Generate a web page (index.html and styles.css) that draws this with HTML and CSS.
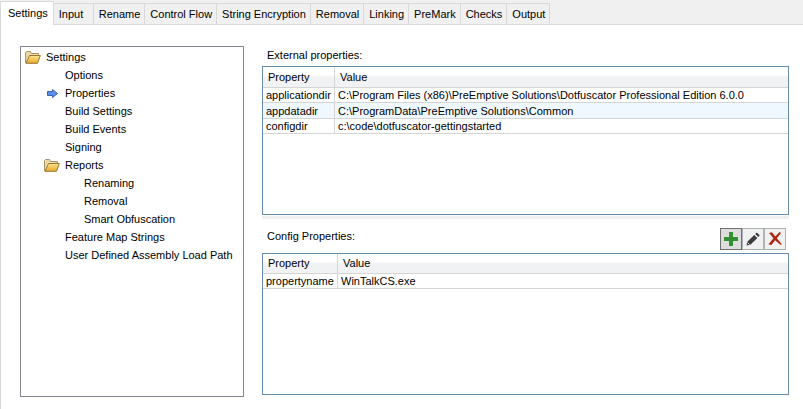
FILE: index.html
```html
<!DOCTYPE html>
<html lang="en">
<head>
    <meta charset="UTF-8">
    <meta name="viewport" content="width=device-width, initial-scale=1.0">
    <title>Settings</title>
    <link rel="stylesheet" href="styles.css">
</head>
<body>
    <!-- Shared icons -->
    <svg class="defs" aria-hidden="true">
        <defs>
            <linearGradient id="gold" x1="0" y1="0" x2="0" y2="1">
                <stop offset="0" stop-color="#fbe48c"/>
                <stop offset="1" stop-color="#e8a92c"/>
            </linearGradient>
            <symbol id="folder" viewBox="0 0 16 13">
                <path d="M0.5 12V1.5L1.5 0.5H5.5L6.5 2.5H13.5V5" fill="#ead9a8" stroke="#a89468"/>
                <path d="M1 12.3L4.5 4.5H15.3L12.5 12.3Z" fill="url(#gold)" stroke="#9a7734"/>
            </symbol>
        </defs>
    </svg>

    <div class="tabs" role="tablist">
        <button class="tab active" role="tab" aria-selected="true">Settings</button>
        <button class="tab" role="tab">Input</button>
        <button class="tab" role="tab">Rename</button>
        <button class="tab" role="tab">Control Flow</button>
        <button class="tab" role="tab">String Encryption</button>
        <button class="tab" role="tab">Removal</button>
        <button class="tab" role="tab">Linking</button>
        <button class="tab" role="tab">PreMark</button>
        <button class="tab" role="tab">Checks</button>
        <button class="tab" role="tab">Output</button>
    </div>

    <div class="page">
        <!-- Settings tree -->
        <nav class="tree">
            <a class="node" href="#"><svg class="folder"><use href="#folder"/></svg>Settings</a>
            <ul>
                <li><a class="node" href="#">Options</a></li>
                <li>
                    <a class="node current" href="#">
                        <svg class="arrow" viewBox="0 0 11 9"><path d="M0.5 2.5H5.5V0.5L10.5 4.5L5.5 8.5V6.5H0.5Z" fill="#5b8fe8" stroke="#3562b5"/></svg>Properties
                    </a>
                </li>
                <li><a class="node" href="#">Build Settings</a></li>
                <li><a class="node" href="#">Build Events</a></li>
                <li><a class="node" href="#">Signing</a></li>
                <li>
                    <a class="node parent" href="#"><svg class="folder"><use href="#folder"/></svg>Reports</a>
                    <ul>
                        <li><a class="node" href="#">Renaming</a></li>
                        <li><a class="node" href="#">Removal</a></li>
                        <li><a class="node" href="#">Smart Obfuscation</a></li>
                    </ul>
                </li>
                <li><a class="node" href="#">Feature Map Strings</a></li>
                <li><a class="node" href="#">User Defined Assembly Load Path</a></li>
            </ul>
        </nav>

        <div class="panels">
            <!-- External properties -->
            <section class="panel">
                <div class="panel-head" id="external-label">External properties:</div>
                <div class="list">
                    <table class="external" aria-labelledby="external-label">
                        <thead>
                            <tr><th>Property</th><th>Value</th></tr>
                        </thead>
                        <tbody>
                            <tr><td>applicationdir</td><td>C:\Program Files (x86)\PreEmptive Solutions\Dotfuscator Professional Edition 6.0.0</td></tr>
                            <tr><td>appdatadir</td><td>C:\ProgramData\PreEmptive Solutions\Common</td></tr>
                            <tr><td>configdir</td><td>c:\code\dotfuscator-gettingstarted</td></tr>
                        </tbody>
                    </table>
                </div>
            </section>

            <div class="splitter"></div>

            <!-- Config properties -->
            <section class="panel">
                <div class="panel-head config-head">
                    <span id="config-label">Config Properties:</span>
                    <div class="toolbar">
                        <button class="tool focused" aria-label="Add">
                            <svg viewBox="0 0 16 16"><path d="M5.5 0.5H10.5V5.5H15.5V10.5H10.5V15.5H5.5V10.5H0.5V5.5H5.5Z" fill="#d3ead3"/><path d="M6 1H10V6H15V10H10V15H6V10H1V6H6Z" fill="#338f33"/></svg>
                        </button>
                        <button class="tool" aria-label="Edit">
                            <svg viewBox="0 0 16 16"><path d="M1.5 14.5L2.3 10.8L9.2 3.9L12.4 7.1L5.4 13.8Z" fill="#3c3c40"/><path d="M10.2 2.9L11.8 1.4L14.7 4.3L13.3 6Z" fill="#3c3c40"/><path d="M2.6 11.6L4.6 13.6" stroke="#f1f1f1"/></svg>
                        </button>
                        <button class="tool" aria-label="Delete">
                            <svg viewBox="0 0 16 16"><path d="M2 2L4.8 1.2L8.3 5.4L12.6 1L14 2L9.8 7.2L14.8 13.2L13.8 14L8 9.2L4.4 14L1.4 13.2L6.5 7.3Z" fill="#b02410"/></svg>
                        </button>
                    </div>
                </div>
                <div class="list">
                    <table class="config" aria-labelledby="config-label">
                        <thead>
                            <tr><th>Property</th><th>Value</th></tr>
                        </thead>
                        <tbody>
                            <tr><td>propertyname</td><td>WinTalkCS.exe</td></tr>
                        </tbody>
                    </table>
                </div>
            </section>
        </div>
    </div>
</body>
</html>
```

FILE: styles.css
```css
* {
    box-sizing: border-box;
}
body {
    display: flex;
    flex-direction: column;
    height: 100vh;
    margin: 0;
    font-family: "Liberation Sans", Arial, sans-serif;
    font-size: 11px;
    color: #000;
    background-color: #fff;
}
button {
    font: inherit;
    color: inherit;
}
.defs {
    display: block;
    width: 0;
    height: 0;
}

/* Tabs */
.tabs {
    display: flex;
    align-items: flex-end;
    height: 25px;
    background-color: #f0f0f0;
    box-shadow: inset 0 -1px #d9d9d9;
}
.tab {
    min-width: 40px;
    height: 22px;
    padding: 0 4px 0 5px;
    border: 1px solid #d9d9d9;
    border-left: none;
    background-color: #f0f0f0;
    text-align: left;
    white-space: nowrap;
}
.tab.active {
    height: 24px;
    padding: 0 5px 2px 7px;
    border-left: 1px solid #d9d9d9;
    border-bottom: none;
    background-color: #fff;
}

/* Tab page */
.page {
    display: flex;
    flex: 1;
    gap: 18px;
    min-height: 0;
    padding: 21px 14px 12px 19px;
    border-left: 1px solid #d9d9d9;
}
.tree {
    flex: 0 0 224px;
    padding: 1px 4px;
    border: 1px solid #828790;
}
.tree ul {
    margin: 0;
    padding: 0 0 0 19px;
    list-style: none;
}
.node {
    display: flex;
    align-items: center;
    height: 18px;
    padding-left: 21px;
    color: #000;
    text-decoration: none;
    white-space: nowrap;
}
.tree > .node,
.node.parent {
    gap: 5px;
    padding-left: 0;
}
.node.current {
    gap: 7px;
    padding-left: 3px;
}
.folder {
    width: 16px;
    height: 13px;
}
.arrow {
    width: 11px;
    height: 9px;
}

/* Property lists */
.panels {
    display: grid;
    flex: 1;
    grid-template-rows: 24fr auto 25fr;
    min-width: 0;
    padding-bottom: 2px;
}
.panel {
    display: flex;
    flex-direction: column;
}
.panel-head {
    height: 20px;
    padding: 3px 0 0 5px;
}
.config-head {
    display: flex;
    align-items: flex-start;
    justify-content: space-between;
    height: 34px;
    padding: 9px 3px 0 5px;
    line-height: 16px;
}
.list {
    flex: 1;
    border: 1px solid #688caf;
}
.splitter {
    height: 3px;
    margin: 1px 0 0;
    background-color: #f0f0f0;
}
table {
    width: 100%;
    table-layout: fixed;
    border-collapse: separate;
    border-spacing: 0;
}
th,
td {
    height: 15px;
    padding: 0 3px;
    border-bottom: 1px solid #d5d5d5;
    font-weight: normal;
    line-height: 14px;
    text-align: left;
    white-space: nowrap;
}
th {
    height: 21px;
    padding: 0 5px;
    background: linear-gradient(#fff 40%, #f1f2f4 50%, #f1f2f4);
}
th:first-child,
td:first-child {
    width: 72px;
    border-right: 1px solid #d5d5d5;
}
.config th {
    height: 20px;
}
.config th:first-child {
    width: 75px;
}
.external tbody tr:nth-child(even) {
    background-color: #f0f8ff;
}
.external tbody tr:nth-child(even) td {
    height: 16px;
}

/* Toolbar */
.toolbar {
    display: flex;
}
.tool {
    display: flex;
    align-items: center;
    justify-content: center;
    width: 22px;
    height: 22px;
    padding: 0;
    border: 1px solid #adb2b5;
    background-color: #f1f1f1;
}
.tool.focused {
    border-color: #707070;
    background-color: #dedcdc;
}
.tool svg {
    width: 16px;
    height: 16px;
}
```
